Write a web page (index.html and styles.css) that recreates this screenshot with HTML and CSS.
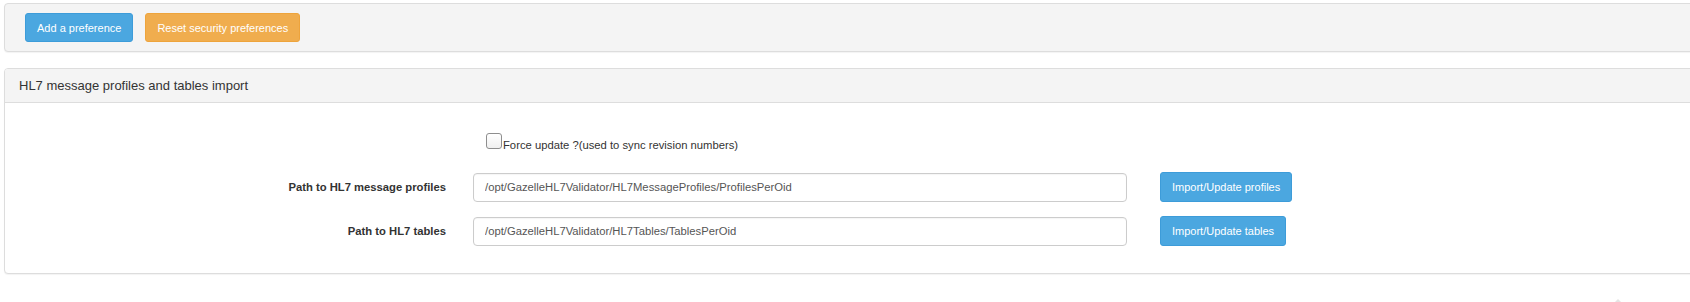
FILE: index.html
```html
<!DOCTYPE html>
<html>
<head>
<meta charset="utf-8">
<title>Preferences</title>
<link rel="stylesheet" href="styles.css">
</head>
<body>
<div class="page">
  <div class="panel toolbar">
    <button class="btn btn-blue">Add a preference</button>
    <button class="btn btn-orange">Reset security preferences</button>
  </div>

  <div class="panel import-panel">
    <div class="panel-heading">HL7 message profiles and tables import</div>
    <div class="panel-body">
      <div class="check-row">
        <input type="checkbox" class="checkbox" id="force">
        <label for="force" class="check-label">Force update ?(used to sync revision numbers)</label>
      </div>
      <div class="form-grid">
        <label class="field-label" for="profiles">Path to HL7 message profiles</label>
        <input class="field-input" id="profiles" type="text" value="/opt/GazelleHL7Validator/HL7MessageProfiles/ProfilesPerOid">
        <button class="btn btn-blue btn-row">Import/Update profiles</button>

        <label class="field-label" for="tables">Path to HL7 tables</label>
        <input class="field-input" id="tables" type="text" value="/opt/GazelleHL7Validator/HL7Tables/TablesPerOid">
        <button class="btn btn-blue btn-row">Import/Update tables</button>
      </div>
    </div>
  </div>
</div>
<div class="scroll-top"></div>
</body>
</html>
```

FILE: styles.css
```css
html, body {
  margin: 0;
  padding: 0;
  overflow: hidden;
  background: #fff;
}

body {
  font-family: "Liberation Sans", Arial, Helvetica, sans-serif;
  font-size: 11px;
  color: #333;
  height: 302px;
  position: relative;
}

.page {
  padding: 3px 0 0 4px;
}

.panel {
  width: 1720px;
  border: 1px solid #ddd;
  border-radius: 4px;
  box-shadow: 0 1px 1px rgba(0, 0, 0, 0.05);
  background: #fff;
}

.toolbar {
  background: #f4f4f4;
  padding: 9px 20px;
  display: flex;
  gap: 12px;
}

.btn {
  font-family: "Liberation Sans", Arial, Helvetica, sans-serif;
  font-size: 11px;
  line-height: 16px;
  color: #fff;
  height: 29px;
  padding: 0 11px;
  border-radius: 3px;
  border: 1px solid transparent;
  cursor: pointer;
}

.btn-blue {
  background: #4ba7e0;
  border-color: #3d9cd9;
}

.btn-orange {
  background: #f0ad4e;
  border-color: #eea43c;
}

.import-panel {
  margin-top: 16px;
}

.panel-heading {
  background: #f4f4f4;
  border-bottom: 1px solid #ddd;
  border-radius: 3px 3px 0 0;
  padding: 7px 14px 6px;
  font-size: 13px;
  line-height: 20px;
  color: #333;
}

.panel-body {
  padding: 30px 0 27px 0;
}

.check-row {
  display: flex;
  align-items: flex-end;
  margin-left: 481px;
  height: 16px;
}

.checkbox {
  appearance: none;
  -webkit-appearance: none;
  width: 16px;
  height: 16px;
  margin: 0;
  border: 1px solid #8e8e8e;
  border-radius: 3px;
  background: linear-gradient(#ffffff, #f0f0f0);
  flex: none;
}

.check-label {
  font-size: 11.25px;
  line-height: 12px;
  margin-left: 1px;
  margin-bottom: -2px;
  color: #333;
}

.form-grid {
  margin-top: 23px;
  display: grid;
  grid-template-columns: 441px 654px max-content;
  column-gap: 27px;
  row-gap: 14px;
  align-items: center;
}

.field-label {
  text-align: right;
  font-weight: bold;
  font-size: 11.25px;
  color: #333;
}

.field-input {
  box-sizing: border-box;
  height: 29px;
  width: 654px;
  border: 1px solid #ccc;
  border-radius: 4px;
  padding: 0 11px;
  font-family: "Liberation Sans", Arial, Helvetica, sans-serif;
  font-size: 11.25px;
  color: #555;
  box-shadow: inset 0 1px 1px rgba(0, 0, 0, 0.04);
}

.btn-row {
  margin-left: 6px;
  height: 30px;
  justify-self: start;
}

.scroll-top {
  position: absolute;
  left: 1615px;
  top: 299px;
  width: 0;
  height: 0;
  border-left: 3px solid transparent;
  border-right: 3px solid transparent;
  border-bottom: 3px solid #e4e4e4;
}
```
